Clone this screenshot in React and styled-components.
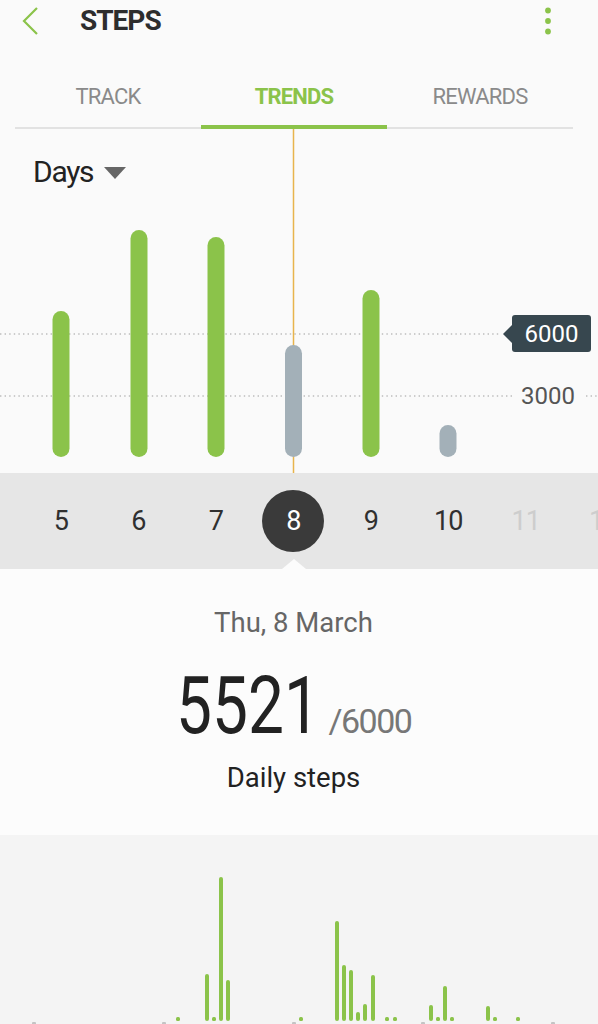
import React from "react";
import styled, { createGlobalStyle } from "styled-components";

const GREEN = "#8bc34a";

const Global = createGlobalStyle`
  html, body { margin: 0; padding: 0; }
  body {
    background: #fafafa;
    font-family: Roboto, "Noto Sans", "Liberation Sans", sans-serif;
    width: 598px;
    overflow: hidden;
  }
  svg { display: block; }
`;

const Page = styled.div`
  width: 598px;
  height: 1024px;
  display: flex;
  flex-direction: column;
  background: #fafafa;
  overflow: hidden;
  & > * { flex-shrink: 0; }
`;

const Header = styled.header`
  height: 42px;
  display: flex;
  align-items: center;
  padding: 0 46px 0 20px;
`;

const Title = styled.h1`
  margin: 0 0 0 40px;
  flex: 1;
  font-size: 28px;
  line-height: 1;
  font-weight: 700;
  letter-spacing: -1px;
  color: #2d2d2d;
`;

const TabBar = styled.nav`
  height: 87px;
  width: 558px;
  box-sizing: border-box;
  margin-left: 15px;
  border-bottom: 2px solid #e2e2e2;
  display: flex;
`;

const Tab = styled.div`
  flex: 1;
  display: flex;
  align-items: flex-end;
  justify-content: center;
  padding-bottom: 17px;
  margin-bottom: -2px;
  border-bottom: 4px solid ${(p) => (p.$active ? GREEN : "transparent")};
  font-size: 22px;
  line-height: 1;
  letter-spacing: -0.8px;
  font-weight: ${(p) => (p.$active ? 700 : 400)};
  color: ${(p) => (p.$active ? GREEN : "#8a8a8a")};
`;

const ChartArea = styled.section`
  position: relative;
  height: 344px;
`;

const ChartCanvas = styled.svg`
  position: absolute;
  inset: 0;
`;

const RangeSelect = styled.div`
  position: relative;
  display: inline-flex;
  align-items: center;
  gap: 11px;
  padding: 28px 0 0 33px;
  font-size: 30px;
  line-height: 1;
  letter-spacing: -1.3px;
  color: #222;
`;

const Caret = styled.span`
  width: 0;
  height: 0;
  border-left: 11px solid transparent;
  border-right: 11px solid transparent;
  border-top: 12px solid #666;
  margin-top: 2px;
`;

const GoalTag = styled.div`
  position: absolute;
  top: 186px;
  left: 512px;
  width: 79px;
  height: 37px;
  border-radius: 3px;
  background: #37474f;
  color: #fff;
  font-size: 24px;
  display: flex;
  align-items: center;
  justify-content: center;
  &::before {
    content: "";
    position: absolute;
    left: -9px;
    top: 50%;
    margin-top: -9px;
    border-top: 9px solid transparent;
    border-bottom: 9px solid transparent;
    border-right: 9px solid #37474f;
  }
`;

const AxisLabel = styled.div`
  position: absolute;
  top: 255px;
  left: 521px;
  font-size: 24px;
  line-height: 24px;
  color: #555;
`;

const DayStrip = styled.div`
  height: 96px;
  background: #e6e6e6;
  display: flex;
  align-items: center;
  padding-left: 22px;
  overflow: hidden;
`;

const Day = styled.div`
  flex: 0 0 77.5px;
  display: flex;
  align-items: center;
  justify-content: center;
`;

const DayNum = styled.span`
  width: 62px;
  height: 62px;
  border-radius: 50%;
  display: flex;
  align-items: center;
  justify-content: center;
  font-size: 27px;
  letter-spacing: -1px;
  background: ${(p) => (p.$selected ? "#3a3a3a" : "transparent")};
  color: ${(p) => (p.$selected ? "#fff" : p.$future ? "#cdcdcd" : "#303030")};
`;

const Summary = styled.section`
  position: relative;
  height: 266px;
  box-sizing: border-box;
  background: #fcfcfc;
  display: flex;
  flex-direction: column;
  align-items: center;
  padding: 40px 11px 0 0;
  &::before {
    content: "";
    position: absolute;
    top: -10px;
    left: 282px;
    border-left: 12px solid transparent;
    border-right: 12px solid transparent;
    border-bottom: 10px solid #fcfcfc;
  }
`;

const DateLine = styled.div`
  font-size: 27.5px;
  line-height: 1;
  color: #666;
`;

const Count = styled.div`
  margin-top: 29px;
  display: flex;
  align-items: baseline;
  gap: 9px;
`;

const Steps = styled.span`
  display: inline-block;
  font-size: 80px;
  line-height: 1;
  color: #222;
  transform: scaleX(0.8);
  margin: 0 -18px;
`;

const Goal = styled.span`
  font-size: 34px;
  line-height: 1;
  letter-spacing: -1.5px;
  color: #777;
`;

const Caption = styled.div`
  margin-top: 18px;
  font-size: 27.5px;
  line-height: 1;
  color: #222;
`;

const HourlyChart = styled.section`
  height: 189px;
  background: #f4f4f4;
`;

const dayBars = [
  { x: 61, top: 311, met: true },
  { x: 139, top: 230, met: true },
  { x: 216, top: 237, met: true },
  { x: 293.5, top: 345, met: false },
  { x: 371, top: 290, met: true },
  { x: 448, top: 425, met: false },
];

const hourBars = [
  [207, 974], [221, 877], [228, 980],
  [337, 921], [344, 965], [351, 970], [358, 1012], [365, 1004], [373, 975],
  [431, 1005], [445, 986], [488, 1006],
];
const hourDots = [178, 214, 301, 387, 395, 438, 452, 495, 518];
const ticks = [34, 164, 294, 423, 553];

const days = [5, 6, 7, 8, 9, 10, 11, 12];

export default function App() {
  const top = 129;
  return (
    <>
      <Global />
      <Page>
        <Header>
          <svg width="20" height="28" viewBox="0 0 20 28">
            <polyline points="17,1 4,14 17,27" fill="none" stroke={GREEN} strokeWidth="2.2" />
          </svg>
          <Title>STEPS</Title>
          <svg width="8" height="28" viewBox="0 0 8 28">
            <circle cx="4" cy="3.5" r="2.9" fill={GREEN} />
            <circle cx="4" cy="14" r="2.9" fill={GREEN} />
            <circle cx="4" cy="24.5" r="2.9" fill={GREEN} />
          </svg>
        </Header>
        <TabBar>
          <Tab>TRACK</Tab>
          <Tab $active>TRENDS</Tab>
          <Tab>REWARDS</Tab>
        </TabBar>
        <ChartArea>
          <ChartCanvas width="598" height="344" viewBox="0 0 598 344">
            <line x1="0" y1="205" x2="500" y2="205" stroke="#bdbdbd" strokeWidth="1.4" strokeDasharray="1.4 3.2" />
            <line x1="0" y1="267" x2="512" y2="267" stroke="#bdbdbd" strokeWidth="1.4" strokeDasharray="1.4 3.2" />
            <line x1="586" y1="267" x2="598" y2="267" stroke="#bdbdbd" strokeWidth="1.4" strokeDasharray="1.4 3.2" />
            <line x1="293.5" y1="0" x2="293.5" y2="344" stroke="#e8b44c" strokeWidth="1.5" />
            {dayBars.map((b) => (
              <rect
                key={b.x}
                x={b.x - 8.5}
                y={b.top - top}
                width="17"
                height={457 - b.top}
                rx="8.5"
                fill={b.met ? GREEN : "#a3b0b8"}
              />
            ))}
          </ChartCanvas>
          <RangeSelect>
            Days
            <Caret />
          </RangeSelect>
          <GoalTag>6000</GoalTag>
          <AxisLabel>3000</AxisLabel>
        </ChartArea>
        <DayStrip>
          {days.map((d) => (
            <Day key={d}>
              <DayNum $selected={d === 8} $future={d > 10}>{d}</DayNum>
            </Day>
          ))}
        </DayStrip>
        <Summary>
          <DateLine>Thu, 8 March</DateLine>
          <Count>
            <Steps>5521</Steps>
            <Goal>/6000</Goal>
          </Count>
          <Caption>Daily steps</Caption>
        </Summary>
        <HourlyChart>
          <svg width="598" height="189" viewBox="0 0 598 189">
            {hourBars.map(([x, t]) => (
              <rect key={x} x={x - 2} y={t - 835} width="4" height={1021 - t} rx="2" fill={GREEN} />
            ))}
            {hourDots.map((x) => (
              <rect key={x} x={x - 2} y="182" width="4" height="4" rx="1.5" fill={GREEN} />
            ))}
            {ticks.map((x) => (
              <rect key={x} x={x - 2} y="187" width="4" height="3" rx="1" fill="#c4c4c4" />
            ))}
          </svg>
        </HourlyChart>
      </Page>
    </>
  );
}
